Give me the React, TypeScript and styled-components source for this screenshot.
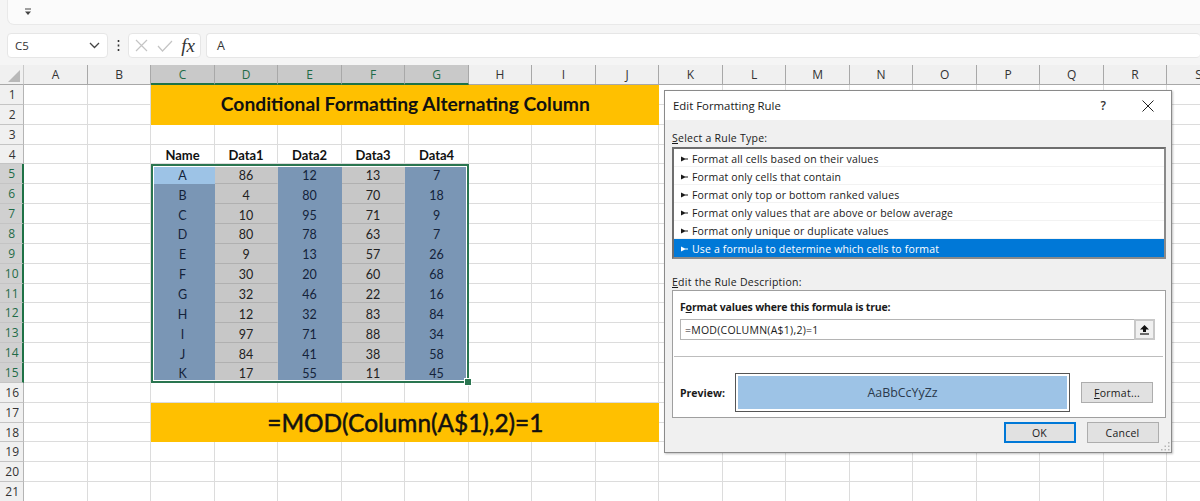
import styled, { createGlobalStyle } from "styled-components";

const GlobalStyle = createGlobalStyle`
  html, body {
    margin: 0;
    padding: 0;
    background: #fff;
  }
`;

const COLUMNS = "ABCDEFGHIJKLMNOPQRS".split("");
const SELECTED_COLUMNS = ["C", "D", "E", "F", "G"];
const ROW_COUNT = 21;

const TABLE = [
  ["A", "86", "12", "13", "7"],
  ["B", "4", "80", "70", "18"],
  ["C", "10", "95", "71", "9"],
  ["D", "80", "78", "63", "7"],
  ["E", "9", "13", "57", "26"],
  ["F", "30", "20", "60", "68"],
  ["G", "32", "46", "22", "16"],
  ["H", "12", "32", "83", "84"],
  ["I", "97", "71", "88", "34"],
  ["J", "84", "41", "38", "58"],
  ["K", "17", "55", "11", "45"],
];

const RULE_TYPES = [
  "Format all cells based on their values",
  "Format only cells that contain",
  "Format only top or bottom ranked values",
  "Format only values that are above or below average",
  "Format only unique or duplicate values",
  "Use a formula to determine which cells to format",
];

const Page = styled.div`
  position: relative;
  width: 1200px;
  height: 501px;
  overflow: hidden;
  background: #f5f5f5;
  font-family: "Open Sans", "Liberation Sans", sans-serif;
`;

// top strip
const Ribbon = styled.div`
  height: 24px;
  margin-left: 7px;
  padding-left: 16px;
  display: flex;
  align-items: center;
  background: #fbfbfb;
  border-bottom: 1px solid #e9e9e9;
  border-left: 1px solid #e9e9e9;
  border-bottom-left-radius: 7px;
`;

const FormulaBar = styled.div`
  height: 40px;
  box-sizing: border-box;
  padding: 8px 0 7px 7px;
  display: flex;
  align-items: stretch;
`;

const BarBox = styled.div`
  box-sizing: border-box;
  background: #fff;
  border: 1px solid #e6e6e6;
  border-radius: 4px;
  display: flex;
  align-items: center;
`;

const NameBox = styled(BarBox)`
  width: 101px;
  padding: 0 7px;
  justify-content: space-between;
  font-size: 11.5px;
  color: #333;
`;

const Dots = styled.div`
  width: 20px;
  display: flex;
  align-items: center;
  justify-content: center;
`;

const FxBox = styled(BarBox)`
  width: 73px;
  padding: 0 5px 0 6px;
  justify-content: space-between;
  margin-right: 5px;
`;

const FxLabel = styled.span`
  font-family: "Liberation Serif", serif;
  font-style: italic;
  font-size: 19px;
  line-height: 20px;
  color: #333;
`;

const FormulaInput = styled(BarBox)`
  flex: 1;
  padding-left: 10px;
  border-right: 0;
  font-size: 12.5px;
  color: #333;
`;

const Sheet = styled.div`
  position: relative;
  display: grid;
  grid-template-columns: 24.3px repeat(19, 63.5px);
  grid-template-rows: 20px repeat(${ROW_COUNT}, 19.86px);
  background: #fff;
`;

const Corner = styled.div`
  background: #f0f0f0;
  border-bottom: 1px solid #a8a8a8;
  border-right: 1px solid #c8c8c8;
  box-sizing: border-box;
  display: flex;
  align-items: flex-end;
  justify-content: flex-end;
  padding: 0 3px 2px 0;
`;

const ColumnHead = styled.div<{ $selected?: boolean }>`
  box-sizing: border-box;
  display: flex;
  align-items: center;
  justify-content: center;
  font-size: 12px;
  background: ${(p) => (p.$selected ? "#c9c9c9" : "#f0f0f0")};
  color: ${(p) => (p.$selected ? "#1f6b47" : "#333")};
  border-right: 1px solid #a8a8a8;
  border-bottom: ${(p) => (p.$selected ? "2px solid #1f7246" : "1px solid #a8a8a8")};
`;

const RowHead = styled.div<{ $selected?: boolean }>`
  box-sizing: border-box;
  display: flex;
  align-items: center;
  justify-content: center;
  font-size: 12px;
  padding-left: 1px;
  background: ${(p) => (p.$selected ? "#d0d0d0" : "#f0f0f0")};
  color: ${(p) => (p.$selected ? "#1f6b47" : "#333")};
  border-bottom: 1px solid #c4c4c4;
  border-right: ${(p) => (p.$selected ? "2px solid #1f7246" : "1px solid #b4b4b4")};
`;

const Cell = styled.div`
  box-sizing: border-box;
  border-right: 1px solid #dcdcdc;
  border-bottom: 1px solid #dcdcdc;
`;

const HeaderCell = styled(Cell)`
  display: flex;
  align-items: center;
  justify-content: center;
  padding-top: 2px;
  font-family: Lato, "Liberation Sans", sans-serif;
  font-weight: 700;
  font-size: 13px;
  color: #111;
`;

const DataCell = styled(Cell)<{ $tone: "blue" | "gray" | "active" }>`
  display: flex;
  align-items: center;
  justify-content: center;
  padding-top: 3px;
  font-family: Lato, "Liberation Sans", sans-serif;
  font-size: 12.5px;
  background: ${(p) =>
    p.$tone === "gray" ? "#c7c7c7" : p.$tone === "active" ? "#9dc3e6" : "#7a96b5"};
  color: ${(p) => (p.$tone === "gray" ? "#222" : "#14233a")};
  border-color: ${(p) => (p.$tone === "gray" ? "#b0b0b0" : p.$tone === "active" ? "#9dc3e6" : "#7a96b5")};
  border-right-color: transparent;
`;

const Banner = styled.div<{ $large?: boolean }>`
  grid-column: span 8;
  grid-row: span 2;
  display: flex;
  align-items: center;
  justify-content: center;
  padding-bottom: ${(p) => (p.$large ? "0" : "2px")};
  background: #ffc000;
  color: #111;
  font-family: Lato, "Liberation Sans", sans-serif;
  font-weight: ${(p) => (p.$large ? 400 : 700)};
  font-size: ${(p) => (p.$large ? "24.4px" : "19.25px")};
  -webkit-text-stroke: ${(p) => (p.$large ? "0.5px #111" : "0")};
`;

const SelectionBox = styled.div`
  position: absolute;
  left: 150.5px;
  top: 98.5px;
  width: 318.5px;
  height: 219.5px;
  box-sizing: border-box;
  border: 2px solid #2a7550;
  box-shadow: inset 0 0 0 1px #fff;
  pointer-events: none;
`;

const FillHandle = styled.div`
  position: absolute;
  right: -5px;
  bottom: -5px;
  width: 6px;
  height: 6px;
  background: #2a7550;
  border: 1px solid #fff;
`;

const Dialog = styled.div`
  position: absolute;
  left: 664px;
  top: 90px;
  width: 507.5px;
  height: 363px;
  box-sizing: border-box;
  background: #f0f0f0;
  border: 1px solid #8a8a8a;
  box-shadow: 1px 1px 2px rgba(0, 0, 0, 0.25);
  color: #1a1a1a;
  font-size: 10.5px;
`;

const TitleBar = styled.div`
  height: 29px;
  box-sizing: border-box;
  padding: 0 17px 0 8px;
  display: flex;
  align-items: center;
  background: #fff;
  font-size: 11.4px;
`;

const TitleText = styled.span`
  flex: 1;
`;

const HelpMark = styled.span`
  width: 41px;
  font-size: 12px;
  font-weight: 600;
  color: #333;
`;

const DialogBody = styled.div`
  padding: 10px 5px 0 7px;
`;

const SectionLabel = styled.div`
  height: 16px;
  line-height: 16px;
  letter-spacing: 0.25px;
`;

const RuleList = styled.div`
  height: 112px;
  box-sizing: border-box;
  margin: 1px 0 15px;
  background: #fff;
  border: 2px solid #6e6e6e;
  border-right-color: #8a8a8a;
  border-bottom-color: #8a8a8a;
`;

const RuleRow = styled.div<{ $active?: boolean }>`
  height: 18px;
  box-sizing: border-box;
  padding: 2px 0 0 7px;
  display: flex;
  align-items: center;
  gap: 4px;
  letter-spacing: 0.16px;
  background: ${(p) => (p.$active ? "#0078d7" : "#fff")};
  color: ${(p) => (p.$active ? "#fff" : "#1a1a1a")};
  border-bottom: 1px solid ${(p) => (p.$active ? "#0078d7" : "#f2f2f2")};
`;

const GroupBox = styled.div`
  height: 128px;
  box-sizing: border-box;
  padding: 8px 0 0;
  background: #fff;
  border: 1px solid #9f9f9f;
`;

const GroupHeading = styled.div`
  height: 16px;
  line-height: 16px;
  padding-left: 7px;
  font-weight: 700;
  letter-spacing: -0.17px;
`;

const RuleInput = styled.div`
  height: 21px;
  box-sizing: border-box;
  margin: 4px 10px 0 7px;
  padding: 1px 0 0 4px;
  display: flex;
  align-items: center;
  justify-content: space-between;
  border: 1px solid #b4b4b4;
  font-size: 10.5px;
  letter-spacing: 0.25px;
`;

const CollapseButton = styled.div`
  width: 21px;
  height: 21px;
  margin: -2px -1px -1px 0;
  box-sizing: border-box;
  display: flex;
  align-items: center;
  justify-content: center;
  background: #f0f0f0;
  border: 2px solid #c8c8c8;
`;

const Divider = styled.div`
  height: 1px;
  margin: 16px 2px 0 1px;
  background: #bdbdbd;
`;

const PreviewRow = styled.div`
  height: 39px;
  margin: 16px 11px 0 7px;
  display: flex;
  align-items: center;
`;

const PreviewLabel = styled.div`
  width: 55px;
  padding-top: 1px;
  font-weight: 700;
`;

const PreviewSwatch = styled.div`
  width: 335px;
  height: 39px;
  box-sizing: border-box;
  margin-right: 11px;
  display: flex;
  align-items: center;
  justify-content: center;
  background: #9dc3e6;
  border: 2px solid #fff;
  outline: 1px solid #555;
  outline-offset: -1px;
  padding: 1px;
  font-size: 12.4px;
  color: #2b3a4c;
  box-shadow: inset 0 0 0 1px #fff;
`;

const PushButton = styled.div<{ $primary?: boolean }>`
  width: 72px;
  height: 21px;
  box-sizing: border-box;
  padding-top: 1px;
  display: flex;
  align-items: center;
  justify-content: center;
  background: #e1e1e1;
  font-size: 10.5px;
  letter-spacing: 0.25px;
  border: ${(p) => (p.$primary ? "2px solid #0078d7" : "1px solid #adadad")};
`;

const DialogFooter = styled.div`
  margin: 4px 7px 0 0;
  display: flex;
  justify-content: flex-end;
  gap: 11px;
`;

const Gripper = styled.svg`
  position: absolute;
  right: 1px;
  bottom: 1px;
`;

function Chevron() {
  return (
    <svg width="11" height="7" viewBox="0 0 11 7">
      <path d="M1 1l4.5 4.5L10 1" fill="none" stroke="#444" strokeWidth="1.3" />
    </svg>
  );
}

function RuleMarker() {
  return (
    <svg width="7" height="6" viewBox="0 0 7 6">
      <path d="M0 .5L4 2.500H7v1H4L0 5.500z" fill="currentColor" />
    </svg>
  );
}

function Accel({ letter, rest }: { letter: string; rest: string }) {
  return (
    <>
      <u>{letter}</u>
      {rest}
    </>
  );
}

function App() {
  const cellsForRow = (row: number) => {
    const isBanner = row === 1 || row === 17;
    const isBannerTail = row === 2 || row === 18;
    const out: React.ReactNode[] = [];

    COLUMNS.forEach((col, i) => {
      const key = `${col}${row}`;
      // C..J is covered by the merged banner
      if (i >= 2 && i < 10 && isBannerTail) return;
      if (i > 2 && i < 10 && isBanner) return;
      if (i === 2 && row === 1) {
        out.push(<Banner key={key}>Conditional Formatting Alternating Column</Banner>);
        return;
      }
      if (i === 2 && row === 17) {
        out.push(
          <Banner key={key} $large>
            =MOD(Column(A$1),2)=1
          </Banner>
        );
        return;
      }
      if (i >= 2 && i <= 6 && row === 4) {
        out.push(
          <HeaderCell key={key}>{["Name", "Data1", "Data2", "Data3", "Data4"][i - 2]}</HeaderCell>
        );
        return;
      }
      if (i >= 2 && i <= 6 && row >= 5 && row <= 15) {
        const active = i === 2 && row === 5;
        const tone = active ? "active" : i % 2 === 0 ? "blue" : "gray";
        out.push(
          <DataCell key={key} $tone={tone}>
            {TABLE[row - 5][i - 2]}
          </DataCell>
        );
        return;
      }
      out.push(<Cell key={key} />);
    });
    return out;
  };

  return (
    <Page>
      <GlobalStyle />
      <Ribbon>
        <svg width="8" height="8" viewBox="0 0 8 8">
          <path d="M1 1h6" stroke="#444" strokeWidth="1" />
          <path d="M1 3.500h6L4 7z" fill="#444" />
        </svg>
      </Ribbon>
      <FormulaBar>
        <NameBox>
          C5
          <Chevron />
        </NameBox>
        <Dots>
          <svg width="3" height="11" viewBox="0 0 3 11">
            <path d="M1.500 0v2M1.500 4.500v2M1.500 9v2" stroke="#333" strokeWidth="1.6" />
          </svg>
        </Dots>
        <FxBox>
          <svg width="13" height="13" viewBox="0 0 13 13">
            <path d="M1 1l11 11M12 1L1 12" stroke="#c4c4c4" strokeWidth="1.2" fill="none" />
          </svg>
          <svg width="16" height="12" viewBox="0 0 16 12">
            <path d="M1 6l4.500 5L15 1" stroke="#c4c4c4" strokeWidth="1.2" fill="none" />
          </svg>
          <FxLabel>fx</FxLabel>
        </FxBox>
        <FormulaInput>A</FormulaInput>
      </FormulaBar>

      <Sheet>
        <Corner>
          <svg width="12" height="12" viewBox="0 0 12 12">
            <path d="M12 0v12H0z" fill="#b8b8b8" />
          </svg>
        </Corner>
        {COLUMNS.map((col) => (
          <ColumnHead key={col} $selected={SELECTED_COLUMNS.includes(col)}>
            {col}
          </ColumnHead>
        ))}
        {Array.from({ length: ROW_COUNT }, (_, i) => i + 1).map((row) => (
          <Rows key={row} row={row} cells={cellsForRow(row)} />
        ))}
        <SelectionBox>
          <FillHandle />
        </SelectionBox>
      </Sheet>

      <Dialog>
        <TitleBar>
          <TitleText>Edit Formatting Rule</TitleText>
          <HelpMark>?</HelpMark>
          <svg width="12" height="12" viewBox="0 0 12 12">
            <path d="M.5.500l11 11M11.500.500l-11 11" stroke="#222" strokeWidth="1" fill="none" />
          </svg>
        </TitleBar>
        <DialogBody>
          <SectionLabel>
            <Accel letter="S" rest="elect a Rule Type:" />
          </SectionLabel>
          <RuleList>
            {RULE_TYPES.map((rule, i) => (
              <RuleRow key={rule} $active={i === RULE_TYPES.length - 1}>
                <RuleMarker />
                {rule}
              </RuleRow>
            ))}
          </RuleList>
          <SectionLabel>
            <Accel letter="E" rest="dit the Rule Description:" />
          </SectionLabel>
          <GroupBox>
            <GroupHeading>
              F<u>o</u>rmat values where this formula is true:
            </GroupHeading>
            <RuleInput>
              =MOD(COLUMN(A$1),2)=1
              <CollapseButton>
                <svg width="11" height="11" viewBox="0 0 11 11">
                  <path d="M5.500 1L10 5.500H7V8H4V5.500H1z" fill="#111" />
                  <path d="M1 10h9" stroke="#111" strokeWidth="1.2" />
                </svg>
              </CollapseButton>
            </RuleInput>
            <Divider />
            <PreviewRow>
              <PreviewLabel>Preview:</PreviewLabel>
              <PreviewSwatch>AaBbCcYyZz</PreviewSwatch>
              <PushButton>
                <Accel letter="F" rest="ormat..." />
              </PushButton>
            </PreviewRow>
          </GroupBox>
          <DialogFooter>
            <PushButton $primary>OK</PushButton>
            <PushButton>Cancel</PushButton>
          </DialogFooter>
        </DialogBody>
        <Gripper width="10" height="10" viewBox="0 0 10 10">
          <path d="M8 1h1.500v1.500H8zM8 4.500h1.500V6H8zM8 8h1.500v1.500H8zM4.500 4.500H6V6H4.500zM4.500 8H6v1.500H4.500zM1 8h1.500v1.500H1z" fill="#b5b5b5" />
        </Gripper>
      </Dialog>
    </Page>
  );
}

function Rows({ row, cells }: { row: number; cells: React.ReactNode[] }) {
  return (
    <>
      <RowHead $selected={row >= 5 && row <= 15}>{row}</RowHead>
      {cells}
    </>
  );
}

export default App;
